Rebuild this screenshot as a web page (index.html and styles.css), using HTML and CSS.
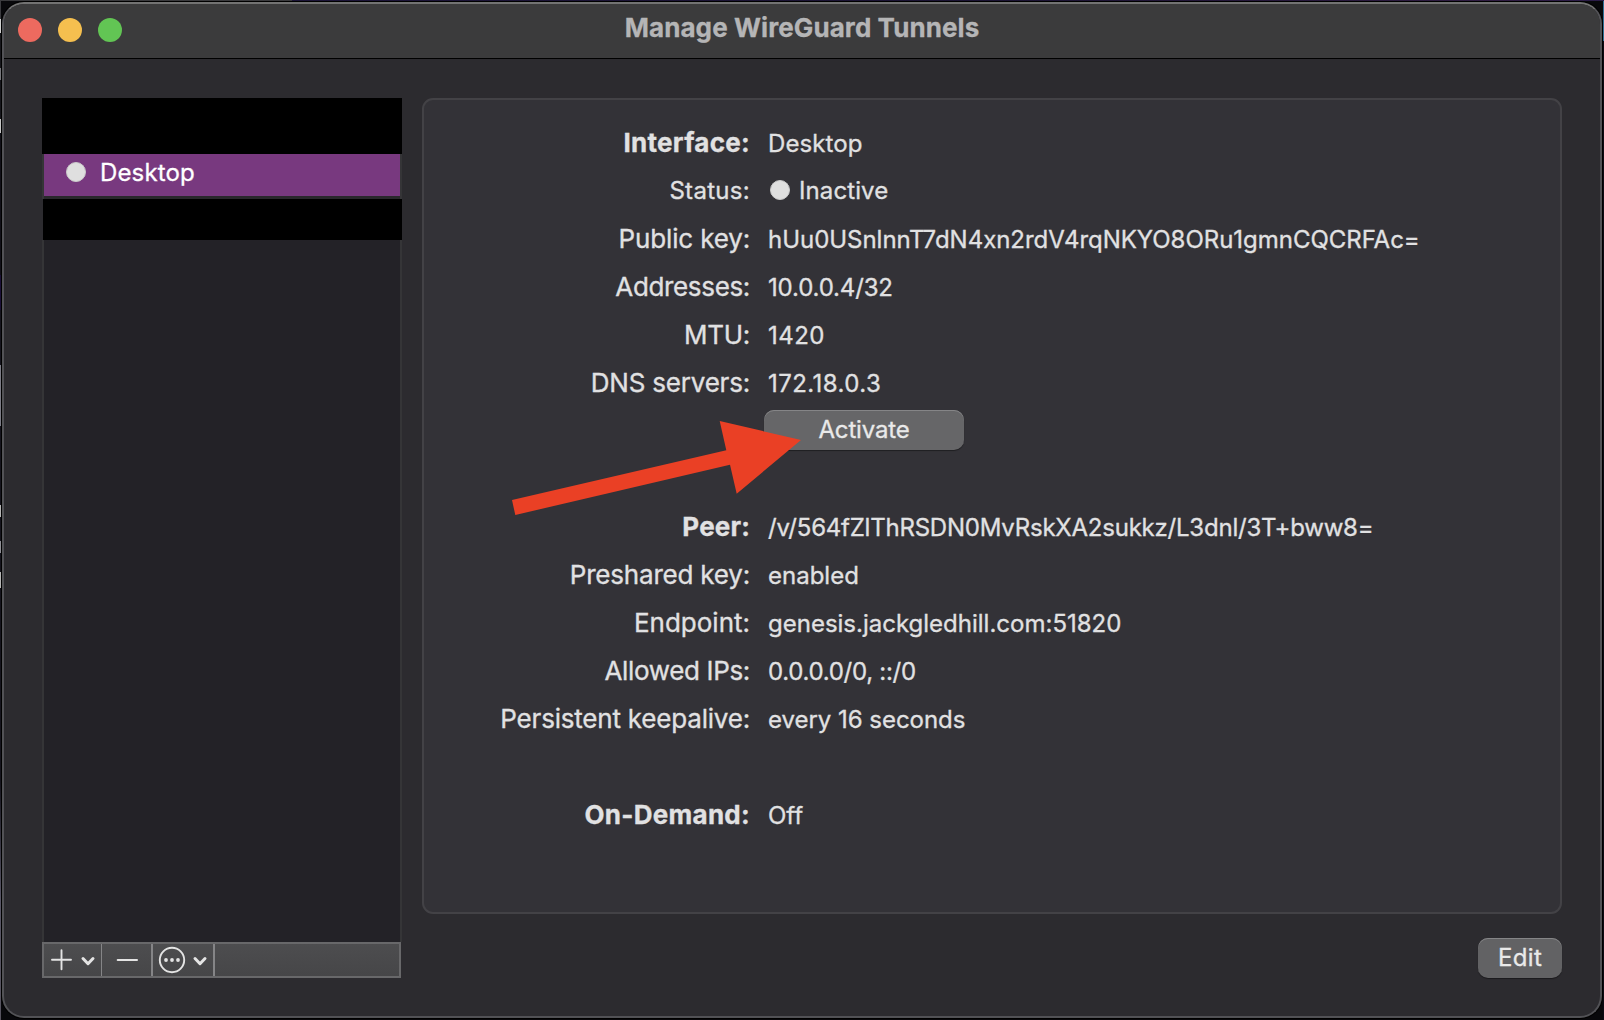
FILE: index.html
```html
<!DOCTYPE html>
<html lang="en">
<head>
<meta charset="utf-8">
<title>Manage WireGuard Tunnels</title>
<link rel="stylesheet" href="styles.css">
</head>
<body>
<div class="window">
  <header class="titlebar">
    <div class="lights"><span class="light close"></span><span class="light minimize"></span><span class="light zoom"></span></div>
    <h1 class="title">Manage WireGuard Tunnels</h1>
  </header>
  <main class="content">
    <aside class="sidebar">
      <div class="masked masked-top"></div>
      <div class="tunnel"><span class="dot"></span><span class="tunnel-name">Desktop</span></div>
      <div class="masked masked-bottom"></div>
      <div class="list-space"></div>
      <div class="toolbar">
        <div class="tool tool-add">
          <svg width="57" height="32" viewBox="0 0 57 32" fill="none" stroke="#e4e4e4" stroke-linecap="round"><path d="M8 15.7H27M17.500 6.200V25.200" stroke-width="1.900"/><path d="M39 14.500L44 19.700L49 14.500" stroke-width="3" stroke-linejoin="round"/></svg>
        </div>
        <div class="tool tool-remove">
          <svg width="48" height="32" viewBox="0 0 48 32" fill="none" stroke="#e4e4e4" stroke-linecap="round"><path d="M15.700 16H35" stroke-width="2"/></svg>
        </div>
        <div class="tool tool-more">
          <svg width="60" height="32" viewBox="0 0 60 32" fill="none" stroke="#e4e4e4" stroke-linecap="round"><circle cx="19" cy="16" r="12.200" stroke-width="1.900"/><g fill="#e4e4e4" stroke="none"><circle cx="13" cy="16" r="1.900"/><circle cx="19" cy="16" r="1.900"/><circle cx="25" cy="16" r="1.900"/></g><path d="M42 14.500L47 19.700L52 14.500" stroke-width="3" stroke-linejoin="round"/></svg>
        </div>
      </div>
    </aside>
    <section class="detail">
      <div class="panel">
        <div class="row"><span class="label strong ls-interface">Interface:</span><span class="value ls-desktop">Desktop</span></div>
        <div class="row row-status"><span class="label small ls-status">Status:</span><span class="value status"><span class="dot"></span><span class="ls-desktop">Inactive</span></span></div>
        <div class="row"><span class="label ls-public">Public key:</span><span class="value ls-key">hUu0USnlnnT7dN4xn2rdV4rqNKYO8ORu1gmnCQCRFAc=</span></div>
        <div class="row"><span class="label ls-tight">Addresses:</span><span class="value ls-public">10.0.0.4/32</span></div>
        <div class="row"><span class="label ls-mtu">MTU:</span><span class="value ls-digits">1420</span></div>
        <div class="row"><span class="label ls-snug">DNS servers:</span><span class="value ls-digits">172.18.0.3</span></div>
        <div class="row row-button"><span></span><button class="button activate" type="button">Activate</button></div>
        <div class="row"><span class="label strong ls-peer">Peer:</span><span class="value ls-peerkey">/v/564fZlThRSDN0MvRskXA2sukkz/L3dnl/3T+bww8=</span></div>
        <div class="row"><span class="label ls-snug">Preshared key:</span><span class="value">enabled</span></div>
        <div class="row"><span class="label">Endpoint:</span><span class="value">genesis.jackgledhill.com:51820</span></div>
        <div class="row"><span class="label ls-tight">Allowed IPs:</span><span class="value ls-mtu">0.0.0.0/0, ::/0</span></div>
        <div class="row"><span class="label ls-snug">Persistent keepalive:</span><span class="value ls-key">every 16 seconds</span></div>
        <div class="row row-ondemand"><span class="label strong ls-interface">On-Demand:</span><span class="value">Off</span></div>
        <svg class="arrow" width="290" height="96" viewBox="0 0 290 96"><path d="M0 80L214.300 30.300L207.700 1L289 20L224.700 73.700L218 44.700L3.300 95Z" fill="#ea4025"/></svg>
      </div>
      <div class="actions"><button class="button edit" type="button">Edit</button></div>
    </section>
  </main>
</div>
</body>
</html>
```
FILE: styles.css
```css
* { box-sizing: border-box; }

body {
  margin: 0;
  width: 1604px;
  height: 1020px;
  padding: 2px 2px 2px;
  overflow: hidden;
  font-family: Inter, "Liberation Sans", sans-serif;
  font-size: 24px;
  color: #e1e1e2;
  -webkit-text-stroke: 0.3px;
  background:
    linear-gradient(90deg, #3a3a3d 292px, #1c1538 292px, #1b1433 1000px, #301d42 1500px, #2a1c48) 0 0 / 100% 1px no-repeat,
    linear-gradient(#2f7196 0 41px, #0c0b14 41px) 100% 0 / 1px 100% no-repeat,
    linear-gradient(#3b3b3f 0 19px, #d0d0d0 19px 33px, #17171c 33px 68px, #77777c 68px 80px, #16161c 80px 119px, #c6c6c6 119px 133px, #111018 133px 275px, #1b1038 275px 310px, #15141d 310px 365px, #7c7c86 365px 426px, #15141d 426px 505px, #b5b5b5 505px 517px, #15141d 517px 541px, #8f8f95 541px 553px, #15141d 553px 572px, #b5b5b5 572px 588px, #15141d 588px 780px, #5a5868 900px, #57545f) 0 0 / 1px 100% no-repeat,
    #08080b;
}

.window {
  display: flex;
  flex-direction: column;
  width: 1600px;
  height: 1016px;
  overflow: hidden;
  border: 2px solid #525256;
  border-top-color: #737373;
  border-radius: 22px;
  background: #2c2b2f;
  box-shadow: 0 0 0 1px #000;
}

.titlebar {
  display: flex;
  flex: none;
  align-items: center;
  position: relative;
  height: 55px;
  padding-left: 14px;
  background: #3b3b3c;
  border-bottom: 1px solid #000;
}

.lights { display: flex; gap: 16px; padding-bottom: 2px; }
.light { width: 24px; height: 24px; border-radius: 50%; }
.close { background: #ed6a5f; }
.minimize { background: #f5bf4f; }
.zoom { background: #62c554; }

.title {
  position: absolute;
  inset: 0;
  margin: 0;
  font-size: 26px;
  line-height: 48px;
  font-weight: 700;
  letter-spacing: 0.09px;
  text-align: center;
  color: #b5b5b6;
}

.content { display: flex; flex: 1; gap: 20px; padding: 39px 38px; }

.sidebar { display: flex; flex-direction: column; width: 360px; height: 880px; }
.masked { flex: none; background: #000; }
.masked-top { height: 56px; }
.masked-bottom { height: 41px; margin-left: 1px; }

.tunnel {
  display: flex;
  flex: none;
  align-items: center;
  gap: 14px;
  height: 45px;
  padding: 0 22px 9px;
  border: solid #353537;
  border-width: 0 2px;
  background: linear-gradient(#78397f 42px, #29282c 42px);
  color: #fff;
}

.tunnel-name { letter-spacing: 0.14px; }

.dot {
  flex: none;
  width: 20px;
  height: 20px;
  border-radius: 50%;
  background: #dfdfdf;
  border: 1px solid #cacaca;
}

.list-space { flex: 1; background: #232227; border: solid #353537; border-width: 0 2px; }

.toolbar {
  display: flex;
  flex: none;
  width: 359px;
  height: 36px;
  border: 2px solid #68686a;
  background: linear-gradient(#4d4d4f, #464648);
}

.tool { display: flex; height: 32px; border-right: 2px solid #858587; }
.tool svg { display: block; }
.tool-add { width: 58px; border-right-width: 1px; }
.tool-remove { width: 51px; }
.tool-more { width: 62px; }

.detail { display: flex; flex-direction: column; width: 1140px; height: 880px; }

.panel {
  position: relative;
  height: 816px;
  padding-top: 19px;
  border: 2px solid #434246;
  border-radius: 11px;
  background: #333237;
}

.row {
  display: grid;
  grid-template-columns: 326px 1fr;
  column-gap: 18px;
  align-items: baseline;
  height: 48px;
  line-height: 48px;
  white-space: nowrap;
}

.row-status { align-items: center; }
.row-button { height: 96px; padding-top: 3px; align-items: start; }
.row-ondemand { margin-top: 48px; }

.label { font-size: 26px; text-align: right; }
.label.small { font-size: 24px; }
.label.strong { font-weight: 700; }
.status { display: flex; align-items: center; gap: 9px; padding-left: 2px; }
.status .dot { margin-bottom: 2px; }

.ls-interface { letter-spacing: 0.28px; }
.ls-status { letter-spacing: 0.3px; }
.ls-public { letter-spacing: -0.15px; }
.ls-tight { letter-spacing: -0.34px; }
.ls-mtu { letter-spacing: -0.29px; }
.ls-snug { letter-spacing: -0.2px; }
.ls-peer { letter-spacing: 0.15px; }
.ls-desktop { letter-spacing: 0.1px; }
.ls-key { letter-spacing: -0.03px; }
.ls-digits { letter-spacing: 0.45px; }
.ls-peerkey { letter-spacing: -0.22px; }

.button {
  height: 40px;
  padding: 0;
  border: 0;
  border-radius: 10px;
  background: #666668;
  box-shadow: inset 0 1px 0 #858587, 0 1px 1px rgba(0, 0, 0, 0.4);
  color: #e9e9e9;
  font: 400 24px/36px Inter, "Liberation Sans", sans-serif;
}

.activate { width: 200px; margin-left: -4px; letter-spacing: -0.16px; }
.edit { width: 84px; letter-spacing: 0.36px; background: #626264; }

.arrow { position: absolute; left: 88px; top: 320px; }

.actions { display: flex; justify-content: flex-end; padding-top: 24px; }
```
